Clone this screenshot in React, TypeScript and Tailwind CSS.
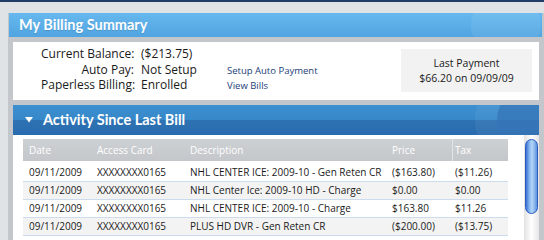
import React from "react";

const rows = [
  ["09/11/2009", "XXXXXXXX0165", "NHL CENTER ICE: 2009-10 - Gen Reten CR", "($163.80)", "($11.26)"],
  ["09/11/2009", "XXXXXXXX0165", "NHL Center Ice: 2009-10 HD - Charge", "$0.00", "$0.00"],
  ["09/11/2009", "XXXXXXXX0165", "NHL CENTER ICE: 2009-10 - Charge", "$163.80", "$11.26"],
  ["09/11/2009", "XXXXXXXX0165", "PLUS HD DVR - Gen Reten CR", "($200.00)", "($13.75)"],
];

export default function App() {
  return (
    <div className="w-[544px] h-[240px] overflow-hidden bg-[#dfe3e6] font-['Open_Sans',sans-serif] text-[#1a1a1a]">
      <div className="h-[2px] bg-[#1f3d66]" />
      <div className="h-[11px]" />
      <div className="ml-[8px] h-[227px] bg-[#c3c7cc] flex flex-col">
        {/* Summary header */}
        <div className="relative ml-[1px] mr-[2px] h-[24px] overflow-hidden bg-[linear-gradient(to_bottom,#66b8ee,#50a4e0)] flex items-center pl-[10px]">
          <div className="absolute left-[462px] top-[-20px] w-[70px] h-[64px] rounded-full bg-white/[0.07]" />
          <span className="relative font-['Lato',sans-serif] font-bold text-[14.5px] text-white [text-shadow:0_1px_0_rgba(0,0,0,0.15)]">
            My Billing Summary
          </span>
        </div>

        {/* Summary content */}
        <div className="mt-[5px] mx-[5px] h-[58px] bg-white flex">
          <div className="pl-[28px] pt-[4px] flex flex-col">
            {[
              ["Current Balance:", "($213.75)", ""],
              ["Auto Pay:", "Not Setup", "Setup Auto Payment"],
              ["Paperless Billing:", "Enrolled", "View Bills"],
            ].map(([l, v, link]) => (
              <div key={l} className="h-[15.5px] flex items-baseline leading-[15.5px]">
                <span className="w-[93px] text-right text-[12px] whitespace-nowrap">{l}</span>
                <span className="ml-[7px] w-[86px] text-[12px] whitespace-nowrap">{v}</span>
                <span className="text-[9.5px] text-[#1b3d78] whitespace-nowrap">{link}</span>
              </div>
            ))}
          </div>
          <div className="ml-auto mr-[7px] mt-[7px] w-[131px] h-[43px] bg-[#f2f2f2] flex flex-col items-center justify-center text-[10.5px] leading-[15px]">
            <span>Last Payment</span>
            <span>$66.20 on 09/09/09</span>
          </div>
        </div>

        {/* Activity header */}
        <div className="relative mt-[5px] mx-[5px] h-[30px] overflow-hidden bg-[linear-gradient(to_bottom,#3e8fcf_0%,#3788c9_50%,#2d72b3_50%,#2a6caf_100%)] flex items-center">
          <div className="absolute left-[462px] top-[-30px] w-[110px] h-[90px] rounded-full bg-white/[0.05]" />
          <div className="absolute left-[484px] top-[-20px] w-[120px] h-[70px] rounded-full bg-[#3573b6]/70" />
          <svg className="relative ml-[12px]" width="8" height="6" viewBox="0 0 8 6">
            <polygon points="0,0 8,0 4,5.5" fill="#ffffff" />
          </svg>
          <span className="relative ml-[10px] font-['Lato',sans-serif] font-bold text-[14.5px] text-white">
            Activity Since Last Bill
          </span>
        </div>

        {/* Activity content */}
        <div className="mx-[5px] flex-1 bg-white flex">
          <div className="ml-[10px] mt-[4px] w-[485px] text-[10px]">
            <div className="h-[22px] bg-[linear-gradient(to_bottom,#ced1d4,#c3c6ca)] text-white flex items-center">
              <div className="w-[68px] pl-[6px]">Date</div>
              <div className="w-[93px] pl-[6px]">Access Card</div>
              <div className="w-[202px] pl-[6px]">Description</div>
              <div className="w-[66px] pl-[6px] self-stretch flex items-center">Price</div>
              <div className="flex-1 pl-[2px] self-stretch flex items-center border-l border-[#e2e4e6]">Tax</div>
            </div>
            <div className="h-[3px]" />
            {rows.map((r, i) => (
              <div
                key={i}
                className={`h-[18px] flex items-center border-b border-[#cddbee] ${i % 2 === 1 ? "bg-[#f3f3f3]" : "bg-white"}`}
              >
                <div className="w-[68px] pl-[6px] whitespace-nowrap">{r[0]}</div>
                <div className="w-[93px] pl-[6px] whitespace-nowrap">{r[1]}</div>
                <div className="w-[202px] pl-[6px] whitespace-nowrap">{r[2]}</div>
                <div className="w-[66px] pl-[6px] whitespace-nowrap">{r[3]}</div>
                <div className="flex-1 pl-[3px] whitespace-nowrap">{r[4]}</div>
              </div>
            ))}
          </div>
          <div className="ml-auto w-[15px] bg-[linear-gradient(to_right,#e2e2e2,#ffffff_50%,#e6e6e6)] pt-[4px] flex justify-center">
            <div className="w-[13px] h-[75px] rounded-full border border-[#2a5cc0] bg-[linear-gradient(to_right,#3b6fd4,#8fbff2_35%,#b5d6f8_55%,#5d92e0)]" />
          </div>
        </div>
      </div>
    </div>
  );
}
